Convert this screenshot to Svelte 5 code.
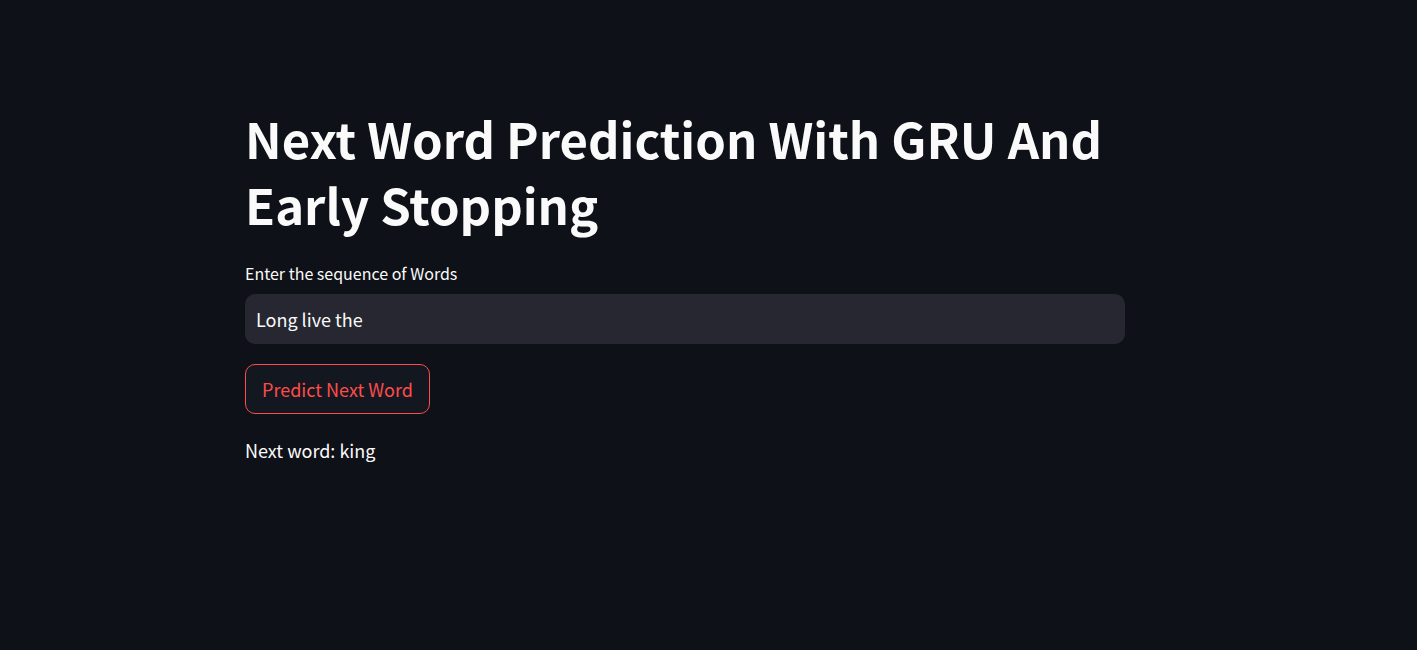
<script>
  let sequence = $state('Long live the');
  let prediction = $state('king');

  const nextWords = { 'long live the': 'king' };

  function predict(event) {
    event.preventDefault();
    prediction = nextWords[sequence.trim().toLowerCase()] ?? prediction;
  }
</script>

<div class="page">
  <main>
    <h1>Next Word Prediction With GRU And Early Stopping</h1>
    <form onsubmit={predict}>
      <label for="sequence">Enter the sequence of Words</label>
      <input id="sequence" type="text" bind:value={sequence} autocomplete="off" />
      <button type="submit">Predict Next Word</button>
    </form>
    <p>Next word: {prediction}</p>
  </main>
</div>

<style>
  :global(body) {
    margin: 0;
    background: #0e1117;
  }

  .page {
    padding: 105px 64px 32px 17px;
  }

  main {
    max-width: 880px;
    margin: 0 auto;
    color: #fafafa;
    font-family: 'Noto Sans CJK SC', sans-serif;
    font-size: 18px;
    line-height: 32px;
  }

  h1 {
    margin: 0 0 22px;
    font-size: 49px;
    font-weight: 700;
    line-height: 66px;
  }

  form {
    display: flex;
    flex-direction: column;
    align-items: flex-start;
  }

  label {
    margin-bottom: 7px;
    font-size: 16px;
    line-height: 28px;
  }

  input {
    box-sizing: border-box;
    width: 100%;
    height: 50px;
    padding: 0 11px;
    border: 0;
    border-radius: 10px;
    background: #262730;
    color: #fafafa;
    font: inherit;
    outline: none;
  }

  button {
    height: 50px;
    margin-top: 20px;
    padding: 0 16px;
    border: 1px solid #ff4b4b;
    border-radius: 10px;
    background: #131720;
    color: #ff4b4b;
    font: inherit;
    cursor: pointer;
  }

  p {
    margin: 20px 0 0;
  }
</style>
